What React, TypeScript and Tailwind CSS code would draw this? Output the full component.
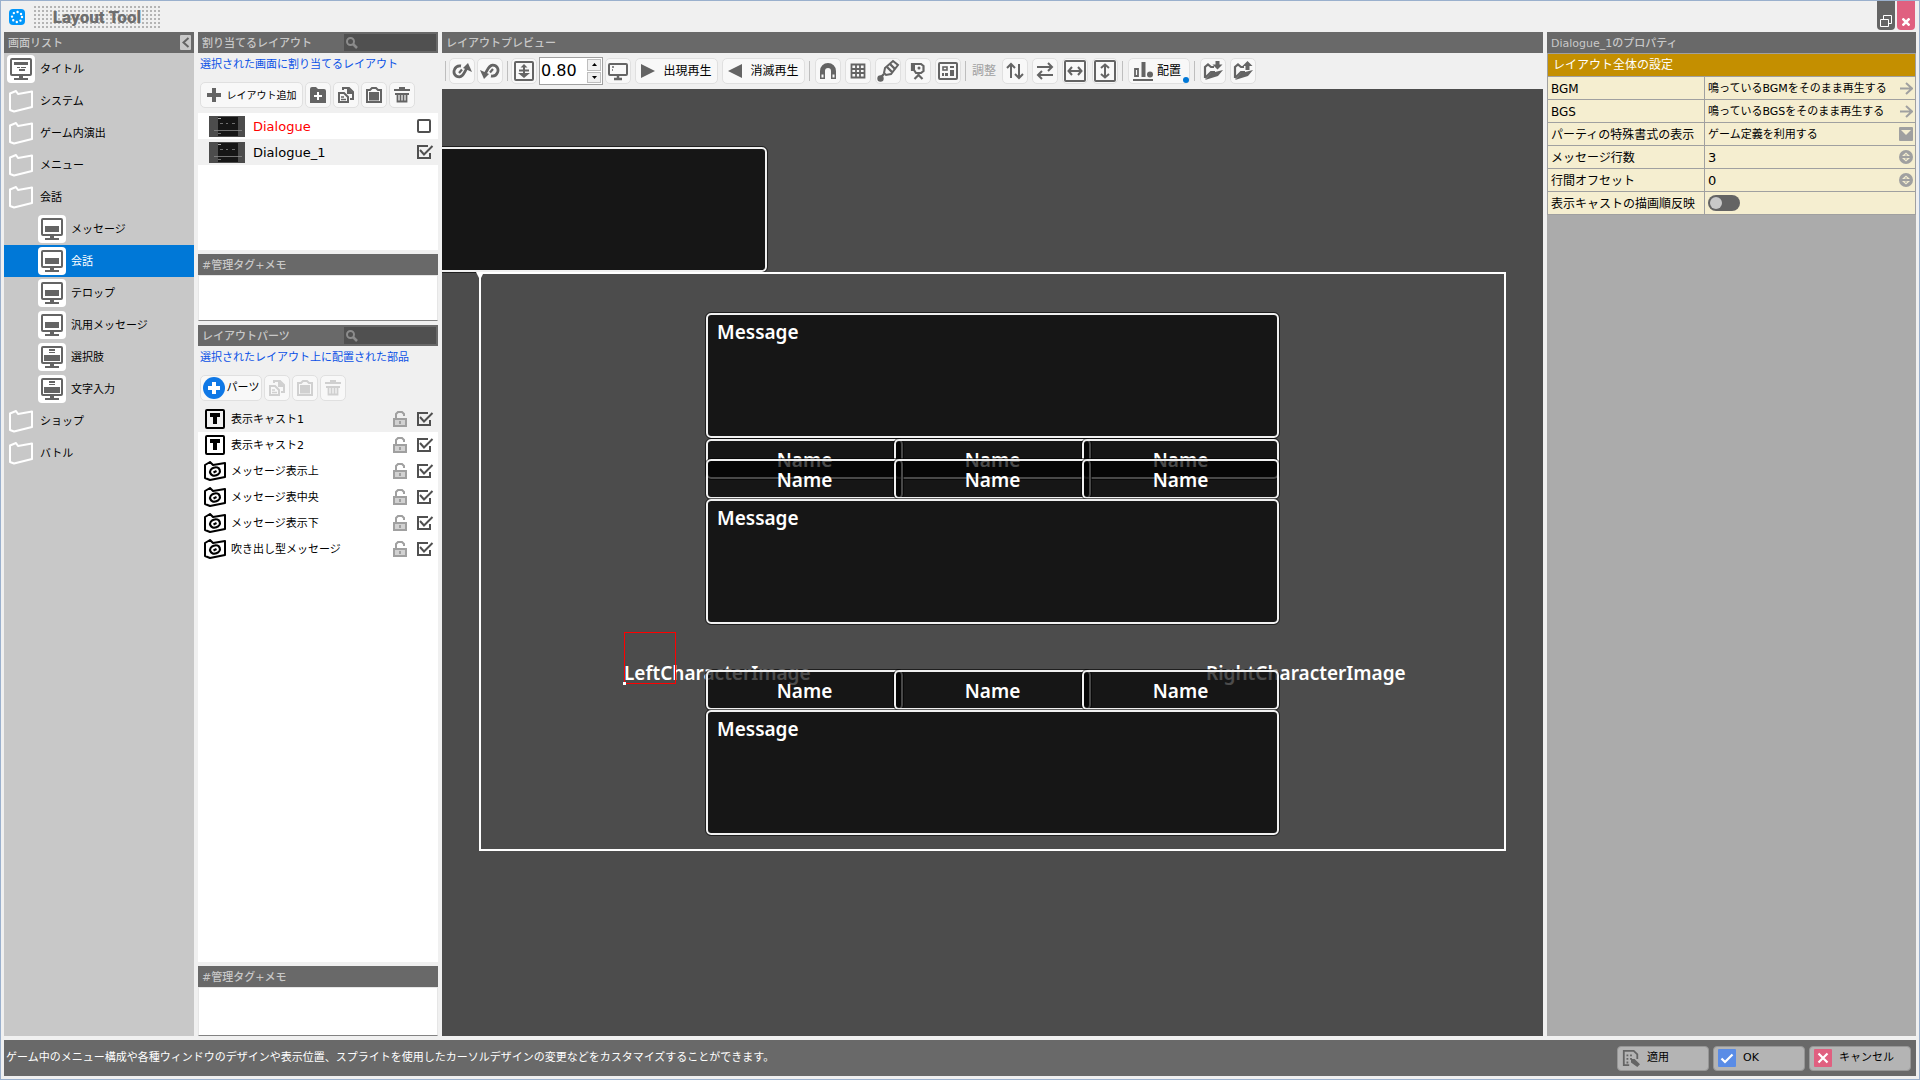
import React, { useState } from 'react';

const Svg: React.FC<{ children: React.ReactNode; className?: string; box?: number }> = ({ children, className = 'size-5', box = 20 }) => (
    <svg viewBox={`0 0 ${box} ${box}`} className={`${className} shrink-0`} fill="none" stroke="currentColor" strokeWidth="2" aria-hidden="true">
        {children}
    </svg>
);

const FolderIcon: React.FC = () => (
    <svg viewBox="0 0 26 24" className="h-6 w-[26px] shrink-0 text-white" fill="none" stroke="currentColor" strokeWidth="2" strokeLinejoin="round" aria-hidden="true">
        <path d="M2 4.500 L8 2 L10 5 L24 2.500 V18 L6 22.500 L2 21 Z" />
    </svg>
);

const ScreenIcon: React.FC<{ kind: 'title' | 'message' | 'choice' }> = ({ kind }) => (
    <span className="flex size-7 shrink-0 items-center justify-center rounded-sm bg-white text-[#646464]">
        <svg viewBox="0 0 24 24" className="size-6" fill="currentColor" aria-hidden="true">
            <path d="M3 1 H21 Q23 1 23 3 V17 Q23 19 21 19 H3 Q1 19 1 17 V3 Q1 1 3 1 Z M3 3 V17 H21 V3 Z" fillRule="evenodd" />
            <path d="M10 19 h4 v2 h5 v2 H5 v-2 h5 Z" />
            {kind === 'title' && <path d="M5 5 h14 v3 H5 Z M8 10 h3 v1 h-3 Z M12 10 h5 v1 h-5 Z M10 12 h6 v2 h-6 Z" />}
            {kind === 'message' && <path d="M5 9 h14 v6 H5 Z" />}
            {kind === 'choice' && <path d="M9 4 h6 v2 H9 Z M9 7 h6 v1 H9 Z M4 10 h16 v6 H4 Z" />}
        </svg>
    </span>
);

const PlusIcon: React.FC = () => (
    <Svg className="size-[14px]" box={14}><path d="M7 0 V14 M0 7 H14" strokeWidth="4" /></Svg>
);

const FolderAddIcon: React.FC = () => (
    <Svg>
        <path d="M2 4 Q2 2 4 2 H8 L10 4 H16 Q18 4 18 6 V18 H2 Z" fill="currentColor" stroke="none" />
        <path d="M10 7 V15 M6 11 H14" stroke="#fff" />
    </Svg>
);

const CopyIcon: React.FC = () => (
    <Svg>
        <path d="M3 8 V17 H12 V12 L8 8 Z" />
        <path d="M5 12 H8 M5 14.500 H10" strokeWidth="1.500" />
        <path d="M7 5 V3 H13 L17 7 V14 H14" />
        <path d="M11 2 L18 9 H11 Z" fill="currentColor" stroke="none" />
    </Svg>
);

const PasteIcon: React.FC = () => (
    <Svg>
        <path d="M3 5 H6 L8 3 H12 L14 5 H17 V17 H3 Z" />
        <path d="M5 7 H15 V15.500 H5 Z" fill="currentColor" stroke="none" />
    </Svg>
);

const TrashIcon: React.FC = () => (
    <Svg>
        <path d="M2 5 H18 M7 3 H13" />
        <path d="M3 8 H17 V10 H3 Z" fill="currentColor" stroke="none" />
        <path d="M5.500 9 V16.500 H14.500 V9 M8.500 9 V17 M11.500 9 V17" strokeWidth="1.800" />
    </Svg>
);

const CurvedArrow: React.FC<{ className: string }> = ({ className }) => (
    <Svg className={className}>
        <path d="M4.500 13 C7 12 7.500 5 12.500 4.200 C17 4 19 8 17.500 11.500 C16.500 14 14 15.500 11 15" strokeWidth="2.800" />
        <path d="M10 11.500 L13 8" strokeWidth="2.200" />
        <path d="M0 9 L9 13 L4 18 Z" fill="currentColor" stroke="none" />
    </Svg>
);

const FitIcon: React.FC = () => (
    <Svg>
        <rect x="1" y="1" width="18" height="18" rx="1" />
        <path d="M10 4 V15 M5 9.500 H15" />
        <path d="M6.500 6.500 L10 3 L13.500 6.500 Z M4 12 H16 L10 17 Z" fill="currentColor" stroke="none" />
    </Svg>
);

const MonitorIcon: React.FC = () => (
    <Svg>
        <rect x="1" y="3" width="18" height="11" rx="1" />
        <path d="M4 6 H6 M4 9 H5" strokeWidth="1.500" />
        <path d="M10 14 V17 M6 18 H14" strokeWidth="2.500" />
    </Svg>
);

const MagnetIcon: React.FC = () => (
    <Svg>
        <path d="M4.500 18 V10 A5.500 5.500 0 0 1 15.500 10 V18" strokeWidth="5" />
        <path d="M4.500 13.500 V16.500 M15.500 13.500 V16.500" stroke="#f8f8f8" strokeWidth="2" />
    </Svg>
);

const GridIcon: React.FC = () => (
    <Svg><path d="M3.500 3.500 H16.500 V16.500 H3.500 Z M8 4 V17 M12 4 V17 M3 8 H17 M3 12 H17" strokeWidth="1.800" /></Svg>
);

const BrushIcon: React.FC = () => (
    <svg viewBox="0 0 24 24" className="size-6 shrink-0" fill="none" stroke="currentColor" strokeWidth="2" aria-hidden="true">
        <path d="M8 14 L9 9 L17 2 L22 6 L15 15 L10 16 Z" />
        <path d="M11 8 L16 13 M14 5 L19 10 M8 15 L4 19" strokeWidth="2.400" />
        <circle cx="4.500" cy="19.500" r="3.200" fill="currentColor" stroke="none" />
    </svg>
);

const CameraIcon: React.FC = () => (
    <Svg>
        <path d="M4 3 H13 L15.500 5 V10 L13 12 H8 L6 9 H4 Z" strokeWidth="2.200" />
        <path d="M4 3 H7 V9 H4 Z" fill="currentColor" stroke="none" />
        <circle cx="11" cy="7" r="1.500" fill="currentColor" stroke="none" />
        <path d="M10.500 12 V14 M6.500 18 L10.500 14 L14.500 18" strokeWidth="2.200" />
    </Svg>
);

const PanelIcon: React.FC = () => (
    <Svg>
        <rect x="1" y="2" width="18" height="16" rx="1" />
        <rect x="5" y="6" width="4" height="3" strokeWidth="1.600" />
        <path d="M4 12 h2 v3 h-2 Z M7 12 h3 v3 h-3 Z M12 5 h4 v2 h-4 Z M12 9 h4 v6 h-4 Z" fill="currentColor" stroke="none" />
    </Svg>
);

const SwapVerticalIcon: React.FC = () => (
    <Svg><path d="M6 17 V3 M2 7 L6 3 L10 7 M14 3 V17 M10 13 L14 17 L18 13" /></Svg>
);

const SwapHorizontalIcon: React.FC = () => (
    <Svg><path d="M2 6 H17 M13 2 L17 6 L13 10 M18 14 H3 M7 10 L3 14 L7 18" /></Svg>
);

const WidthIcon: React.FC = () => (
    <Svg className="size-[22px]" box={22}>
        <rect x="1" y="1" width="20" height="20" rx="1" />
        <path d="M4.500 11 H17.500 M8 7 L4.500 11 L8 15 M14 7 L17.500 11 L14 15" />
    </Svg>
);

const HeightIcon: React.FC = () => (
    <Svg className="size-[22px]" box={22}>
        <rect x="1" y="1" width="20" height="20" rx="1" />
        <path d="M11 4.500 V17.500 M7 8 L11 4.500 L15 8 M7 14 L11 17.500 L15 14" />
    </Svg>
);

const AlignIcon: React.FC = () => (
    <Svg>
        <path d="M0 19 H20 M2 8 V15 H5 V8 Z" strokeWidth="1.800" />
        <path d="M10.500 1 V16" strokeWidth="4" />
        <circle cx="17" cy="13.500" r="3" fill="currentColor" stroke="none" />
    </Svg>
);

const FolderArrowIcon: React.FC<{ up?: boolean }> = ({ up }) => (
    <Svg>
        <path d="M2 17 V6 L5 3.500 L8 6 H11 M2 17 L8 11 L12 11" strokeWidth="2.200" />
        <path d="M2 19 L8 12 L20 9 L15 15 Z" fill="currentColor" stroke="none" />
        {up
            ? <path d="M9.500 5 L14.500 0 L19.500 5 H16.500 V9 H12.500 V5 Z" fill="currentColor" stroke="none" />
            : <path d="M12.500 0 H16.500 V3.500 H19.500 L14.500 8.500 L9.500 3.500 H12.500 Z" fill="currentColor" stroke="none" />}
    </Svg>
);

const TextPartIcon: React.FC = () => (
    <Svg>
        <rect x="1" y="1" width="18" height="18" rx="1" />
        <path d="M5 4 H15 V8 H12 V15 H8 V8 H5 Z" fill="currentColor" stroke="none" />
    </Svg>
);

const FolderPartIcon: React.FC = () => (
    <svg viewBox="0 0 22 20" className="h-5 w-[22px] shrink-0" fill="none" stroke="currentColor" strokeWidth="2" strokeLinejoin="round" aria-hidden="true">
        <path d="M1 4 L6 1 L9 4 L21 2 V16 L6 19 L1 17 Z" />
        <ellipse cx="11" cy="10.500" rx="5" ry="4" transform="rotate(-20 11 10.500)" strokeWidth="2.200" />
        <path d="M9.500 11.500 L12.500 10" />
    </svg>
);

const LockIcon: React.FC = () => (
    <svg viewBox="0 0 14 16" className="h-4 w-[14px] shrink-0 text-[#a0a0a0]" fill="none" stroke="currentColor" strokeWidth="2" aria-hidden="true">
        <path d="M3 8 V3 L5 1 H9 L11 3 V5" />
        <path d="M1 8 H13 V15 H1 Z" fill="#d2d2d2" />
        <path d="M7 10 V13" />
    </svg>
);

const SearchIcon: React.FC = () => (
    <svg viewBox="0 0 12 12" className="size-3 shrink-0 text-[#8c8c8c]" fill="none" stroke="currentColor" strokeWidth="2" aria-hidden="true">
        <circle cx="4.500" cy="4.500" r="3.500" />
        <path d="M7 7 L11 11" strokeWidth="2.500" />
    </svg>
);

const Check: React.FC<{ label: string; checked: boolean; onChange: () => void }> = ({ label, checked, onChange }) => (
    <label className="relative flex h-4 w-[18px] shrink-0 text-[#505050]">
        <input type="checkbox" aria-label={label} checked={checked} onChange={onChange} className="absolute inset-0 opacity-0" />
        <svg viewBox="0 0 18 16" className="h-4 w-[18px]" fill="none" stroke="currentColor" strokeWidth="2" aria-hidden="true">
            {checked ? <path d="M14 9 V14 H2 V2 H12 M4 6 L8 10.500 L16.500 2" /> : <rect x="2" y="2" width="12" height="12" rx="1" />}
        </svg>
    </label>
);

const ToolButton: React.FC<{ label: string; children: React.ReactNode; disabled?: boolean; className?: string }> = ({ label, children, disabled, className = 'w-[26px]' }) => (
    <button
        type="button"
        aria-label={label}
        disabled={disabled}
        className={`flex h-[26px] shrink-0 items-center justify-center rounded-[5px] border border-[#e0e0e0] bg-[#f8f8f8] text-[#646464] disabled:text-[#d0d0d0] ${className}`}
    >
        {children}
    </button>
);

const Separator: React.FC = () => <span className="mr-px h-5 w-px shrink-0 bg-[#bebebe]" />;

const Header: React.FC<{ title: string; search?: boolean; children?: React.ReactNode }> = ({ title, search, children }) => (
    <div className="flex h-[21px] shrink-0 items-center justify-between bg-[#696969] pl-1">
        <h2 className="pt-[2px] text-[11px] leading-4 font-medium whitespace-nowrap text-[#c8c8c8]">{title}</h2>
        {search && (
            <label className="mr-[2px] flex h-[17px] w-[92px] items-center bg-[#505050] pl-[2px]">
                <SearchIcon />
                <input type="search" aria-label={`${title} 検索`} className="w-full min-w-0 bg-transparent px-1 text-[11px] text-white outline-none" />
            </label>
        )}
        {children}
    </div>
);

const Memo: React.FC<{ id: string; height: string }> = ({ id, height }) => (
    <section className="flex shrink-0 flex-col">
        <label htmlFor={id} className="flex h-[21px] items-center bg-[#696969] pt-[2px] pl-1 text-[11px] leading-4 font-medium text-[#c8c8c8]">#管理タグ+メモ</label>
        <textarea id={id} className={`w-full resize-none border border-[#e6e6e6] border-b-[#828282] bg-white px-1 text-[11px] outline-none ${height}`} />
    </section>
);

const screens = [
    { name: 'タイトル', icon: 'title', child: false },
    { name: 'システム', icon: 'folder', child: false },
    { name: 'ゲーム内演出', icon: 'folder', child: false },
    { name: 'メニュー', icon: 'folder', child: false },
    { name: '会話', icon: 'folder', child: false },
    { name: 'メッセージ', icon: 'message', child: true },
    { name: '会話', icon: 'message', child: true },
    { name: 'テロップ', icon: 'message', child: true },
    { name: '汎用メッセージ', icon: 'message', child: true },
    { name: '選択肢', icon: 'choice', child: true },
    { name: '文字入力', icon: 'choice', child: true },
    { name: 'ショップ', icon: 'folder', child: false },
    { name: 'バトル', icon: 'folder', child: false },
] as const;

const ScreenList: React.FC = () => {
    const [selected, setSelected] = useState(6);
    return (
        <nav className="flex flex-col bg-[#c8c8c8]">
            <Header title="画面リスト">
                <button type="button" aria-label="閉じる" className="mr-[3px] flex h-[15px] w-[11px] items-center justify-center rounded-[1px] bg-[#c8c8c8] text-[#646464]">
                    <svg viewBox="0 0 11 15" className="h-[15px] w-[11px]" fill="none" stroke="currentColor" strokeWidth="2" aria-hidden="true"><path d="M8.500 3 L3.500 7.500 L8.500 12" /></svg>
                </button>
            </Header>
            <ul>
                {screens.map((screen, index) => (
                    <li key={index}>
                        <button
                            type="button"
                            onClick={() => setSelected(index)}
                            className={`flex h-8 w-full items-center gap-[5px] text-left text-[11px] leading-4 ${screen.child ? 'pl-[34px]' : 'pl-[3px]'} ${index === selected ? 'bg-[#0078d7] text-white' : 'text-black'}`}
                        >
                            <span className="flex w-7 justify-center">
                                {screen.icon === 'folder' ? <FolderIcon /> : <ScreenIcon kind={screen.icon} />}
                            </span>
                            <span className="pt-[2px]">{screen.name}</span>
                        </button>
                    </li>
                ))}
            </ul>
        </nav>
    );
};

const Thumbnail: React.FC = () => (
    <svg viewBox="0 0 36 21" className="h-[21px] w-9 shrink-0" aria-hidden="true">
        <rect width="36" height="21" fill="#4c4c4c" />
        <rect x="9" y="1" width="20" height="19" fill="#161616" />
        <path d="M9 2.500 h3" stroke="#aaa" />
        <path d="M11 7.500 h3 M17 7.500 h2 M23 7.500 h3 M9 17.500 h3" stroke="#6e6e6e" />
        <path d="M5 14.500 h28" stroke="#8a8a8a" strokeWidth="0.800" />
    </svg>
);

const layouts = ['Dialogue', 'Dialogue_1'];

const parts = [
    { name: '表示キャスト1', folder: false },
    { name: '表示キャスト2', folder: false },
    { name: 'メッセージ表示上', folder: true },
    { name: 'メッセージ表中央', folder: true },
    { name: 'メッセージ表示下', folder: true },
    { name: '吹き出し型メッセージ', folder: true },
];

const LayoutColumn: React.FC = () => {
    const [assigned, setAssigned] = useState([false, true]);
    const [visible, setVisible] = useState(parts.map(() => true));
    const toggle = (list: boolean[], index: number) => list.map((value, i) => (i === index ? !value : value));

    return (
        <div className="flex min-h-0 flex-col gap-1">
            <section>
                <Header title="割り当てるレイアウト" search />
                <p className="px-[2px] pt-1 text-[11px] leading-4 text-[#0a50e6]">選択された画面に割り当てるレイアウト</p>
                <div className="flex items-center gap-[2px] px-[2px] pt-[9px] pb-[5px]">
                    <ToolButton label="レイアウト追加" className="w-[103px] gap-[6px]">
                        <PlusIcon />
                        <span className="text-[10px] text-black">レイアウト追加</span>
                    </ToolButton>
                    <ToolButton label="フォルダ追加"><FolderAddIcon /></ToolButton>
                    <ToolButton label="コピー"><CopyIcon /></ToolButton>
                    <ToolButton label="貼り付け"><PasteIcon /></ToolButton>
                    <ToolButton label="削除"><TrashIcon /></ToolButton>
                </div>
                <ul className="h-[137px] bg-white">
                    {layouts.map((name, index) => (
                        <li key={name} className={`flex h-[26px] items-center pr-1 pl-[11px] ${index === 1 ? 'bg-[#f0f0f0]' : ''}`}>
                            <Thumbnail />
                            <span className={`ml-2 flex-1 pt-[2px] text-[13px] ${index === 0 ? 'text-[#ff0000]' : 'text-black'}`}>{name}</span>
                            <Check label={name} checked={assigned[index]} onChange={() => setAssigned(toggle(assigned, index))} />
                        </li>
                    ))}
                </ul>
            </section>
            <Memo id="layout-memo" height="h-[46px]" />
            <section className="flex min-h-0 flex-1 flex-col">
                <Header title="レイアウトパーツ" search />
                <p className="px-[2px] pt-1 text-[11px] leading-4 text-[#0a50e6]">選択されたレイアウト上に配置された部品</p>
                <div className="flex items-center gap-[2px] px-[2px] pt-[9px] pb-[5px]">
                    <ToolButton label="パーツ" className="w-[62px] gap-[2px]">
                        <svg viewBox="0 0 22 22" className="size-[22px] shrink-0" aria-hidden="true">
                            <circle cx="11" cy="11" r="11" fill="#0f78e6" />
                            <path d="M11 5 V17 M5 11 H17" stroke="#fff" strokeWidth="4" />
                        </svg>
                        <span className="text-[11px] text-black">パーツ</span>
                    </ToolButton>
                    <ToolButton label="パーツをコピー" disabled><CopyIcon /></ToolButton>
                    <ToolButton label="パーツを貼り付け" disabled><PasteIcon /></ToolButton>
                    <ToolButton label="パーツを削除" disabled><TrashIcon /></ToolButton>
                </div>
                <ul className="flex-1 bg-white">
                    {parts.map((part, index) => (
                        <li key={part.name} className={`flex h-[26px] items-center pr-1 pl-[6px] ${index === 0 ? 'bg-[#f0f0f0]' : ''}`}>
                            <span className="flex w-[22px] justify-center">{part.folder ? <FolderPartIcon /> : <TextPartIcon />}</span>
                            <span className="ml-[5px] flex-1 pt-[2px] text-[11px] leading-4">{part.name}</span>
                            <LockIcon />
                            <span className="ml-[9px] flex">
                                <Check label={part.name} checked={visible[index]} onChange={() => setVisible(toggle(visible, index))} />
                            </span>
                        </li>
                    ))}
                </ul>
            </section>
            <Memo id="parts-memo" height="h-[49px]" />
        </div>
    );
};

const Toolbar: React.FC = () => {
    const [zoom, setZoom] = useState('0.80');
    const step = (amount: number) => setZoom((Number(zoom) + amount).toFixed(2));
    return (
        <div className="flex h-9 shrink-0 items-center gap-1 pl-[3px]">
            <div className="flex items-center gap-[2px]">
                <Separator />
                <ToolButton label="元に戻す"><CurvedArrow className="size-5 rotate-180" /></ToolButton>
                <ToolButton label="やり直す"><CurvedArrow className="size-5" /></ToolButton>
            </div>
            <div className="flex items-center gap-[2px]">
                <Separator />
                <ToolButton label="全体表示"><FitIcon /></ToolButton>
                <div className="flex h-7 w-16 border border-[#a0a0a0] bg-white p-px">
                    <input aria-label="拡大率" value={zoom} onChange={(e) => setZoom(e.target.value)} className="w-[46px] min-w-0 text-[16px] outline-none" />
                    <div className="flex flex-1 flex-col gap-px">
                        <button type="button" aria-label="拡大" onClick={() => step(0.05)} className="flex flex-1 items-center justify-center border border-[#bebebe] bg-[#f0f0f0]">
                            <svg viewBox="0 0 5 3" className="h-[3px] w-[5px]" aria-hidden="true"><path d="M0 3 L2.500 0 L5 3 Z" /></svg>
                        </button>
                        <button type="button" aria-label="縮小" onClick={() => step(-0.05)} className="flex flex-1 items-center justify-center border border-[#bebebe] bg-[#f0f0f0]">
                            <svg viewBox="0 0 5 3" className="h-[3px] w-[5px]" aria-hidden="true"><path d="M0 0 L2.500 3 L5 0 Z" /></svg>
                        </button>
                    </div>
                </div>
                <ToolButton label="画面サイズ"><MonitorIcon /></ToolButton>
            </div>
            <ToolButton label="出現再生" className="w-[83px] gap-2">
                <svg viewBox="0 0 14 14" className="size-[14px]" fill="currentColor" aria-hidden="true"><path d="M0 0 L14 7 L0 14 Z" /></svg>
                <span className="text-[12px] text-black">出現再生</span>
            </ToolButton>
            <ToolButton label="消滅再生" className="w-[83px] gap-2">
                <svg viewBox="0 0 14 14" className="size-[14px]" fill="currentColor" aria-hidden="true"><path d="M14 0 L0 7 L14 14 Z" /></svg>
                <span className="text-[12px] text-black">消滅再生</span>
            </ToolButton>
            <Separator />
            <ToolButton label="吸着"><MagnetIcon /></ToolButton>
            <ToolButton label="グリッド"><GridIcon /></ToolButton>
            <ToolButton label="装飾"><BrushIcon /></ToolButton>
            <ToolButton label="カメラ"><CameraIcon /></ToolButton>
            <ToolButton label="パネル"><PanelIcon /></ToolButton>
            <Separator />
            <span className="pr-[2px] pl-px text-[12px] text-[#a0a0a0]">調整</span>
            <ToolButton label="上下入れ替え"><SwapVerticalIcon /></ToolButton>
            <ToolButton label="左右入れ替え"><SwapHorizontalIcon /></ToolButton>
            <ToolButton label="幅を揃える"><WidthIcon /></ToolButton>
            <ToolButton label="高さを揃える"><HeightIcon /></ToolButton>
            <Separator />
            <ToolButton label="配置" className="relative w-[62px] gap-1 pr-1">
                <AlignIcon />
                <span className="text-[12px] text-black">配置</span>
                <span className="absolute right-0 bottom-0 size-[6px] rounded-full bg-[#0078d7]" />
            </ToolButton>
            <Separator />
            <ToolButton label="読み込み"><FolderArrowIcon /></ToolButton>
            <ToolButton label="書き出し"><FolderArrowIcon up /></ToolButton>
        </div>
    );
};

const windowBox = 'absolute rounded-[5px] border-2 border-[#f0f0f0] bg-black/70 bg-clip-padding outline-1 outline-black/60';

const MessageWindow: React.FC<{ className: string; text?: string }> = ({ className, text }) => (
    <div className={`${windowBox} h-[125px] w-[573px] px-[9px] pt-1 ${className}`}>{text}</div>
);

const NameRow: React.FC<{ className: string }> = ({ className }) => (
    <div className={`absolute left-[227px] h-10 w-[573px] ${className}`}>
        <div className={`${windowBox} left-0 flex h-10 w-[197px] items-center justify-center pt-[2px]`}>Name</div>
        <div className={`${windowBox} left-[188px] flex h-10 w-[197px] items-center justify-center pt-[2px]`}>Name</div>
        <div className={`${windowBox} left-[376px] flex h-10 w-[197px] items-center justify-center pt-[2px]`}>Name</div>
    </div>
);

const Preview: React.FC = () => (
    <main className="flex min-h-0 min-w-0 flex-col">
        <Header title="レイアウトプレビュー" />
        <Toolbar />
        <div className="flex min-h-0 flex-1 items-center justify-center overflow-hidden bg-[#4c4c4c] pb-[2px]">
            <div className="relative h-[579px] w-[1027px] shrink-0 font-['Noto_Sans'] text-[19px] leading-[26px] font-semibold text-white">
                <MessageWindow className="top-[-125px] left-[-285px]" />
                <div className="absolute inset-0 border-2 border-white" />
                <svg viewBox="0 0 8 8" className="absolute top-0 -left-[3px] size-2" aria-hidden="true"><path d="M0 0 H8 L4 8 Z" fill="#fff" /></svg>
                <span className="absolute top-[388px] left-[145px]">LeftCharacterImage</span>
                <span className="absolute top-[388px] left-[727px]">RightCharacterImage</span>
                <MessageWindow className="top-[41px] left-[227px]" text="Message" />
                <NameRow className="top-[167px]" />
                <NameRow className="top-[187px]" />
                <MessageWindow className="top-[227px] left-[227px]" text="Message" />
                <NameRow className="top-[398px]" />
                <MessageWindow className="top-[438px] left-[227px]" text="Message" />
                <div className="absolute top-[360px] left-[145px] size-[52px] border border-[#ff0000]" />
                <div className="absolute top-[410px] left-[144px] size-[3px] bg-white" />
            </div>
        </div>
    </main>
);

const ArrowIcon: React.FC = () => (
    <svg viewBox="0 0 13 13" className="size-[13px] shrink-0 text-[#a0a0a0]" fill="none" stroke="currentColor" strokeWidth="2" aria-hidden="true">
        <path d="M0 6.500 H12 M6 1 L12 6.500 L6 12" />
    </svg>
);

const SpinIcon: React.FC = () => (
    <svg viewBox="0 0 14 14" className="size-[14px] shrink-0" aria-hidden="true">
        <circle cx="7" cy="7" r="7" fill="#a0a0a0" />
        <path d="M3 6 L7 2.500 L11 6 Z M3 8 L7 11.500 L11 8 Z" fill="#f5eed0" />
        <path d="M5.500 5.500 L7 4 L8.500 5.500 Z M5.500 8.500 L7 10 L8.500 8.500 Z" fill="#a0a0a0" />
    </svg>
);

const PropertyRow: React.FC<{ label: string; id: string; children: React.ReactNode }> = ({ label, id, children }) => (
    <tr className="h-[23px] border border-[#a0a0a0] bg-[#f5eed0]">
        <th scope="row" className="border-r border-[#a0a0a0] p-0 pl-[3px] text-left font-normal">
            <label htmlFor={id} className="block pt-[2px] leading-5 whitespace-nowrap">{label}</label>
        </th>
        <td className="p-0 pr-[2px] pl-[3px]">
            <div className="flex h-[22px] items-center justify-between">{children}</div>
        </td>
    </tr>
);

const Properties: React.FC = () => {
    const [lines, setLines] = useState('3');
    const [offset, setOffset] = useState('0');
    const [reflect, setReflect] = useState(false);
    const numberStyle = 'w-full min-w-0 bg-transparent pt-[2px] text-[13px] outline-none [&::-webkit-inner-spin-button]:appearance-none';
    return (
        <aside className="bg-[#ababab]">
            <Header title="Dialogue_1のプロパティ" />
            <table className="w-full table-fixed border-collapse text-[12px]">
                <colgroup>
                    <col className="w-[157px]" />
                    <col />
                </colgroup>
                <tbody>
                    <tr className="h-[23px] border border-[#a0a0a0] bg-[#c48f00]">
                        <th colSpan={2} className="p-0 pl-[5px] text-left leading-[22px] font-normal text-white">レイアウト全体の設定</th>
                    </tr>
                    <PropertyRow label="BGM" id="bgm">
                        <button id="bgm" type="button" className="flex w-full items-center justify-between text-[11px] whitespace-nowrap">
                            <span className="pt-[2px]">鳴っているBGMをそのまま再生する</span>
                            <ArrowIcon />
                        </button>
                    </PropertyRow>
                    <PropertyRow label="BGS" id="bgs">
                        <button id="bgs" type="button" className="flex w-full items-center justify-between text-[11px] whitespace-nowrap">
                            <span className="pt-[2px]">鳴っているBGSをそのまま再生する</span>
                            <ArrowIcon />
                        </button>
                    </PropertyRow>
                    <PropertyRow label="パーティの特殊書式の表示" id="party">
                        <select id="party" className="flex-1 appearance-none bg-transparent pt-[2px] text-[11px] outline-none">
                            <option>ゲーム定義を利用する</option>
                        </select>
                        <svg viewBox="0 0 14 14" className="size-[14px] shrink-0" aria-hidden="true">
                            <rect width="14" height="14" rx="1" fill="#a0a0a0" />
                            <path d="M2 3 H12 L7 8 Z" fill="#f5eed0" />
                        </svg>
                    </PropertyRow>
                    <PropertyRow label="メッセージ行数" id="lines">
                        <input id="lines" type="number" value={lines} onChange={(e) => setLines(e.target.value)} className={numberStyle} />
                        <SpinIcon />
                    </PropertyRow>
                    <PropertyRow label="行間オフセット" id="offset">
                        <input id="offset" type="number" value={offset} onChange={(e) => setOffset(e.target.value)} className={numberStyle} />
                        <SpinIcon />
                    </PropertyRow>
                    <PropertyRow label="表示キャストの描画順反映" id="reflect">
                        <span className="relative flex h-4 w-8">
                            <input id="reflect" type="checkbox" role="switch" checked={reflect} onChange={() => setReflect(!reflect)} className="peer h-4 w-8 appearance-none rounded-full bg-[#646464] checked:bg-[#0078d7]" />
                            <span className="pointer-events-none absolute top-[2px] left-[2px] size-3 rounded-full bg-[#c8c8c8] peer-checked:left-[18px]" />
                        </span>
                    </PropertyRow>
                </tbody>
            </table>
        </aside>
    );
};

const TitleBar: React.FC = () => (
    <header className="flex h-[31px] shrink-0 justify-between">
        <div className="flex items-center pt-px pl-[5px]">
            <svg viewBox="0 0 16 16" className="size-4" aria-hidden="true">
                <rect width="16" height="16" rx="4" fill="#0096fa" />
                <circle cx="8" cy="8" r="5" fill="none" stroke="#fff" strokeWidth="2.400" strokeLinecap="round" strokeDasharray="0 3.927" />
            </svg>
            <div className="relative ml-[9px] flex h-[22px] w-[126px] items-center justify-center">
                <svg className="absolute inset-0 size-full" aria-hidden="true">
                    <defs>
                        <pattern id="dots" width="4" height="4" patternUnits="userSpaceOnUse"><rect width="2" height="2" fill="#b4b4b4" /></pattern>
                    </defs>
                    <rect width="100%" height="100%" fill="url(#dots)" />
                </svg>
                <h1 className="relative font-['Roboto'] text-[17px] leading-5 font-black whitespace-nowrap text-[#6e6e6e]">Layout Tool</h1>
            </div>
        </div>
        <div className="flex gap-[2px] pr-px">
            <button type="button" aria-label="元のサイズに戻す" className="flex h-[29px] w-[18px] items-end justify-center rounded-b-[4px] bg-[#646464] pb-[3px]">
                <svg viewBox="0 0 12 12" className="size-3" fill="none" stroke="#fff" aria-hidden="true">
                    <path d="M0.500 4.500 H8.500 V11.500 H0.500 Z M3.500 4.500 V0.500 H11.500 V8.500 H8.500" />
                </svg>
            </button>
            <button type="button" aria-label="ウィンドウを閉じる" className="flex h-[29px] w-[18px] items-end justify-center rounded-b-[4px] bg-[#e06080] pb-1">
                <svg viewBox="0 0 8 8" className="size-2" stroke="#fff" strokeWidth="2.500" aria-hidden="true"><path d="M0.500 0.500 L7.500 7.500 M7.500 0.500 L0.500 7.500" /></svg>
            </button>
        </div>
    </header>
);

const footerButton = 'flex h-[25px] items-center gap-[7px] rounded-[4px] border border-[#969696] bg-[#b4b4b4] pl-1 text-[11px] text-black';

const Footer: React.FC = () => (
    <footer className="flex h-9 shrink-0 items-center justify-between bg-[#696969] pr-[5px] pl-[2px]">
        <p className="text-[11px] text-white">ゲーム中のメニュー構成や各種ウィンドウのデザインや表示位置、スプライトを使用したカーソルデザインの変更などをカスタマイズすることができます。</p>
        <div className="flex gap-1">
            <button type="button" className={`${footerButton} w-[92px]`}>
                <Svg className="size-[18px] text-[#646464]">
                    <path d="M8 18 H2 V2 H13 L17 6 V11" />
                    <path d="M5 6 h2 v2 h-2 Z M9 6 h2 v2 h-2 Z M5 10 h2 v2 h-2 Z M9 10 h2 v2 h-2 Z M5 14 h2 v2 h-2 Z M10 11 H14 L20 17 L17 20 L10 15 Z" fill="currentColor" stroke="none" />
                </Svg>
                適用
            </button>
            <button type="button" className={`${footerButton} w-[92px]`}>
                <svg viewBox="0 0 18 18" className="size-[18px]" fill="none" stroke="#fff" strokeWidth="2.200" aria-hidden="true">
                    <rect width="18" height="18" rx="1" fill="#5a8ce6" stroke="none" />
                    <path d="M3.500 9.500 L7 13 L14.500 5.500" />
                </svg>
                OK
            </button>
            <button type="button" className={`${footerButton} w-[102px]`}>
                <svg viewBox="0 0 18 18" className="size-[18px]" fill="none" stroke="#fff" strokeWidth="2.200" aria-hidden="true">
                    <rect width="18" height="18" rx="1" fill="#e06080" stroke="none" />
                    <path d="M4.500 4.500 L13.500 13.500 M13.500 4.500 L4.500 13.500" />
                </svg>
                キャンセル
            </button>
        </div>
    </footer>
);

const App: React.FC = () => (
    <div lang="ja" className="flex h-screen flex-col border border-[#9ab0cd] bg-[#f0f0f0] px-[3px] pb-[3px] font-['DejaVu_Sans','Noto_Sans_CJK_JP',sans-serif]">
        <TitleBar />
        <div className="mb-1 grid min-h-0 flex-1 grid-cols-[190px_240px_minmax(0,1fr)_369px] grid-rows-[minmax(0,1fr)] gap-1">
            <ScreenList />
            <LayoutColumn />
            <Preview />
            <Properties />
        </div>
        <Footer />
    </div>
);

export default App;
